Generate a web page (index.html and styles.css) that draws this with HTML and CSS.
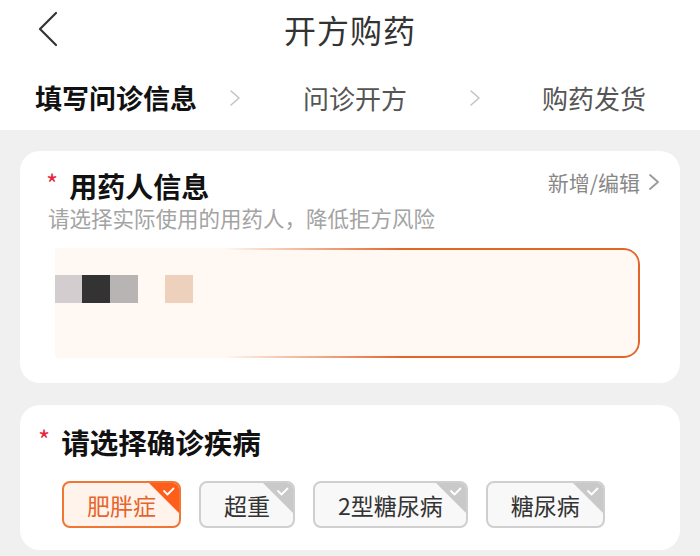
FILE: index.html
```html
<!DOCTYPE html>
<html lang="zh">
<head>
<meta charset="utf-8">
<link rel="stylesheet" href="styles.css">
</head>
<body>
<div class="page">
  <header class="header">
    <div class="topbar">
      <svg class="back" width="24" height="36" viewBox="0 0 24 36"><path d="M20 2 L4 18 L20 34" fill="none" stroke="#333" stroke-width="2.2" stroke-linecap="round" stroke-linejoin="round"/></svg>
      <div class="title">开方购药</div>
    </div>
    <div class="steps">
      <span class="step active">填写问诊信息</span>
      <svg class="chev chev1" width="12" height="18" viewBox="0 0 12 18"><path d="M2 2 L10 9 L2 16" fill="none" stroke="#c4c4c4" stroke-width="1.6" stroke-linecap="round" stroke-linejoin="round"/></svg>
      <span class="step s2">问诊开方</span>
      <svg class="chev chev2" width="12" height="18" viewBox="0 0 12 18"><path d="M2 2 L10 9 L2 16" fill="none" stroke="#c4c4c4" stroke-width="1.6" stroke-linecap="round" stroke-linejoin="round"/></svg>
      <span class="step s3">购药发货</span>
    </div>
  </header>

  <section class="card card-user">
    <div class="card-head">
      <div class="card-title"><span class="req">*</span>用药人信息</div>
      <div class="edit">新增/编辑<svg width="12" height="20" viewBox="0 0 12 20"><path d="M2 3 L10 10 L2 17" fill="none" stroke="#999" stroke-width="1.8" stroke-linecap="round" stroke-linejoin="round"/></svg></div>
    </div>
    <div class="subtitle">请选择实际使用的用药人，降低拒方风险</div>
    <div class="patient">
      <div class="pix">
        <span class="px p1"></span><span class="px p2"></span><span class="px p3"></span><span class="px p4"></span>
      </div>
    </div>
  </section>

  <section class="card card-disease">
    <div class="card-title"><span class="req">*</span>请选择确诊疾病</div>
    <div class="tags">
      <div class="tag on">肥胖症<svg class="corner" width="30" height="30" viewBox="0 0 30 30"><path d="M0 0 H30 V30 Z" fill="#ff5d1a"/><path d="M15 8 L18.5 11.5 L24.5 5.5" fill="none" stroke="#fff" stroke-width="1.8" stroke-linecap="round" stroke-linejoin="round"/></svg></div>
      <div class="tag">超重<svg class="corner" width="30" height="30" viewBox="0 0 30 30"><path d="M0 0 H30 V30 Z" fill="#c9c9c9"/><path d="M15 8 L18.5 11.5 L24.5 5.5" fill="none" stroke="#fff" stroke-width="1.8" stroke-linecap="round" stroke-linejoin="round"/></svg></div>
      <div class="tag">2型糖尿病<svg class="corner" width="30" height="30" viewBox="0 0 30 30"><path d="M0 0 H30 V30 Z" fill="#c9c9c9"/><path d="M15 8 L18.5 11.5 L24.5 5.5" fill="none" stroke="#fff" stroke-width="1.8" stroke-linecap="round" stroke-linejoin="round"/></svg></div>
      <div class="tag">糖尿病<svg class="corner" width="30" height="30" viewBox="0 0 30 30"><path d="M0 0 H30 V30 Z" fill="#c9c9c9"/><path d="M15 8 L18.5 11.5 L24.5 5.5" fill="none" stroke="#fff" stroke-width="1.8" stroke-linecap="round" stroke-linejoin="round"/></svg></div>
    </div>
  </section>
</div>
</body>
</html>
```

FILE: styles.css
```css
* { box-sizing: border-box; }
html, body {
  margin: 0;
  padding: 0;
  background: #f0f0f0;
  font-family: "Noto Sans CJK SC", "Noto Sans", sans-serif;
}
.page {
  width: 700px;
  height: 556px;
  overflow: hidden;
}
.header {
  background: #fff;
  height: 130px;
}
.topbar {
  height: 58px;
  display: flex;
  align-items: center;
  justify-content: center;
  position: relative;
}
.back {
  position: absolute;
  left: 36px;
  top: 11px;
}
.title {
  font-size: 32px;
  line-height: 40px;
  color: #333;
  letter-spacing: 1px;
}
.steps {
  display: flex;
  align-items: center;
  height: 60px;
  padding-left: 35px;
  margin-top: 10px;
}
.step {
  font-size: 26px;
  line-height: 36px;
  color: #555;
}
.step.active {
  font-size: 27px;
  font-weight: 700;
  color: #111;
}
.chev1 { margin-left: 32px; }
.s2 { margin-left: 62px; }
.chev2 { margin-left: 62px; }
.s3 { margin-left: 61px; }

.card {
  background: #fff;
  border-radius: 20px;
  margin: 0 20px;
}
.card-user {
  margin-top: 21px;
  padding: 17px 20px 25px 28px;
}
.card-head {
  display: flex;
  justify-content: space-between;
  align-items: center;
}
.card-title {
  font-size: 28px;
  line-height: 36px;
  font-weight: 700;
  color: #111;
  display: flex;
  align-items: center;
}
.card-disease .card-title {
  font-size: 28.5px;
  line-height: 38px;
}
.req {
  color: #e3263a;
  font-size: 26px;
  font-weight: 400;
  margin-right: 9px;
  line-height: 36px;
  position: relative;
  top: -3px;
  left: -2px;
}
.edit {
  font-size: 21px;
  line-height: 28px;
  color: #888;
  display: flex;
  align-items: center;
  gap: 8px;
  margin-top: -8px;
}
.subtitle {
  font-size: 21.5px;
  line-height: 28px;
  color: #a3a3a3;
}
.patient {
  margin-top: 16px;
  margin-left: 7px;
  margin-right: 20px;
  height: 110px;
  border-radius: 3px 16px 16px 3px;
  background: #fff8f3;
  position: relative;
  padding: 27px 0 0 0;
}
.patient::after {
  content: "";
  position: absolute;
  inset: 0 0 0 -10px;
  border: 2px solid #e2662a;
  border-radius: 16px;
  -webkit-mask-image: linear-gradient(to right, transparent 0%, transparent 30%, #000 60%);
  mask-image: linear-gradient(to right, transparent 0%, transparent 30%, #000 60%);
  pointer-events: none;
}
.pix {
  display: flex;
  position: relative;
}
.px {
  width: 27px;
  height: 28px;
  display: block;
}
.p1 { background: #d3cdcf; }
.p2 { background: #333; width: 28px; }
.p3 { background: #b8b4b4; width: 28px; }
.p4 { background: #edd1bd; margin-left: 27px; width: 28px; }

.card-disease {
  margin-top: 22px;
  padding: 18px 20px 22px 20px;
}
.tags {
  display: flex;
  gap: 18px;
  margin-top: 20px;
  margin-left: 22px;
}
.tag {
  position: relative;
  height: 47px;
  padding: 0 23px;
  border: 2px solid #cfcfcf;
  border-radius: 8px;
  background: #f8f8f8;
  color: #333;
  font-size: 23px;
  display: flex;
  align-items: center;
  overflow: hidden;
}
.tag.on {
  border-color: #f07636;
  background: #fff3ec;
  color: #e8632a;
}
.corner {
  position: absolute;
  top: 0;
  right: 0;
}
```
